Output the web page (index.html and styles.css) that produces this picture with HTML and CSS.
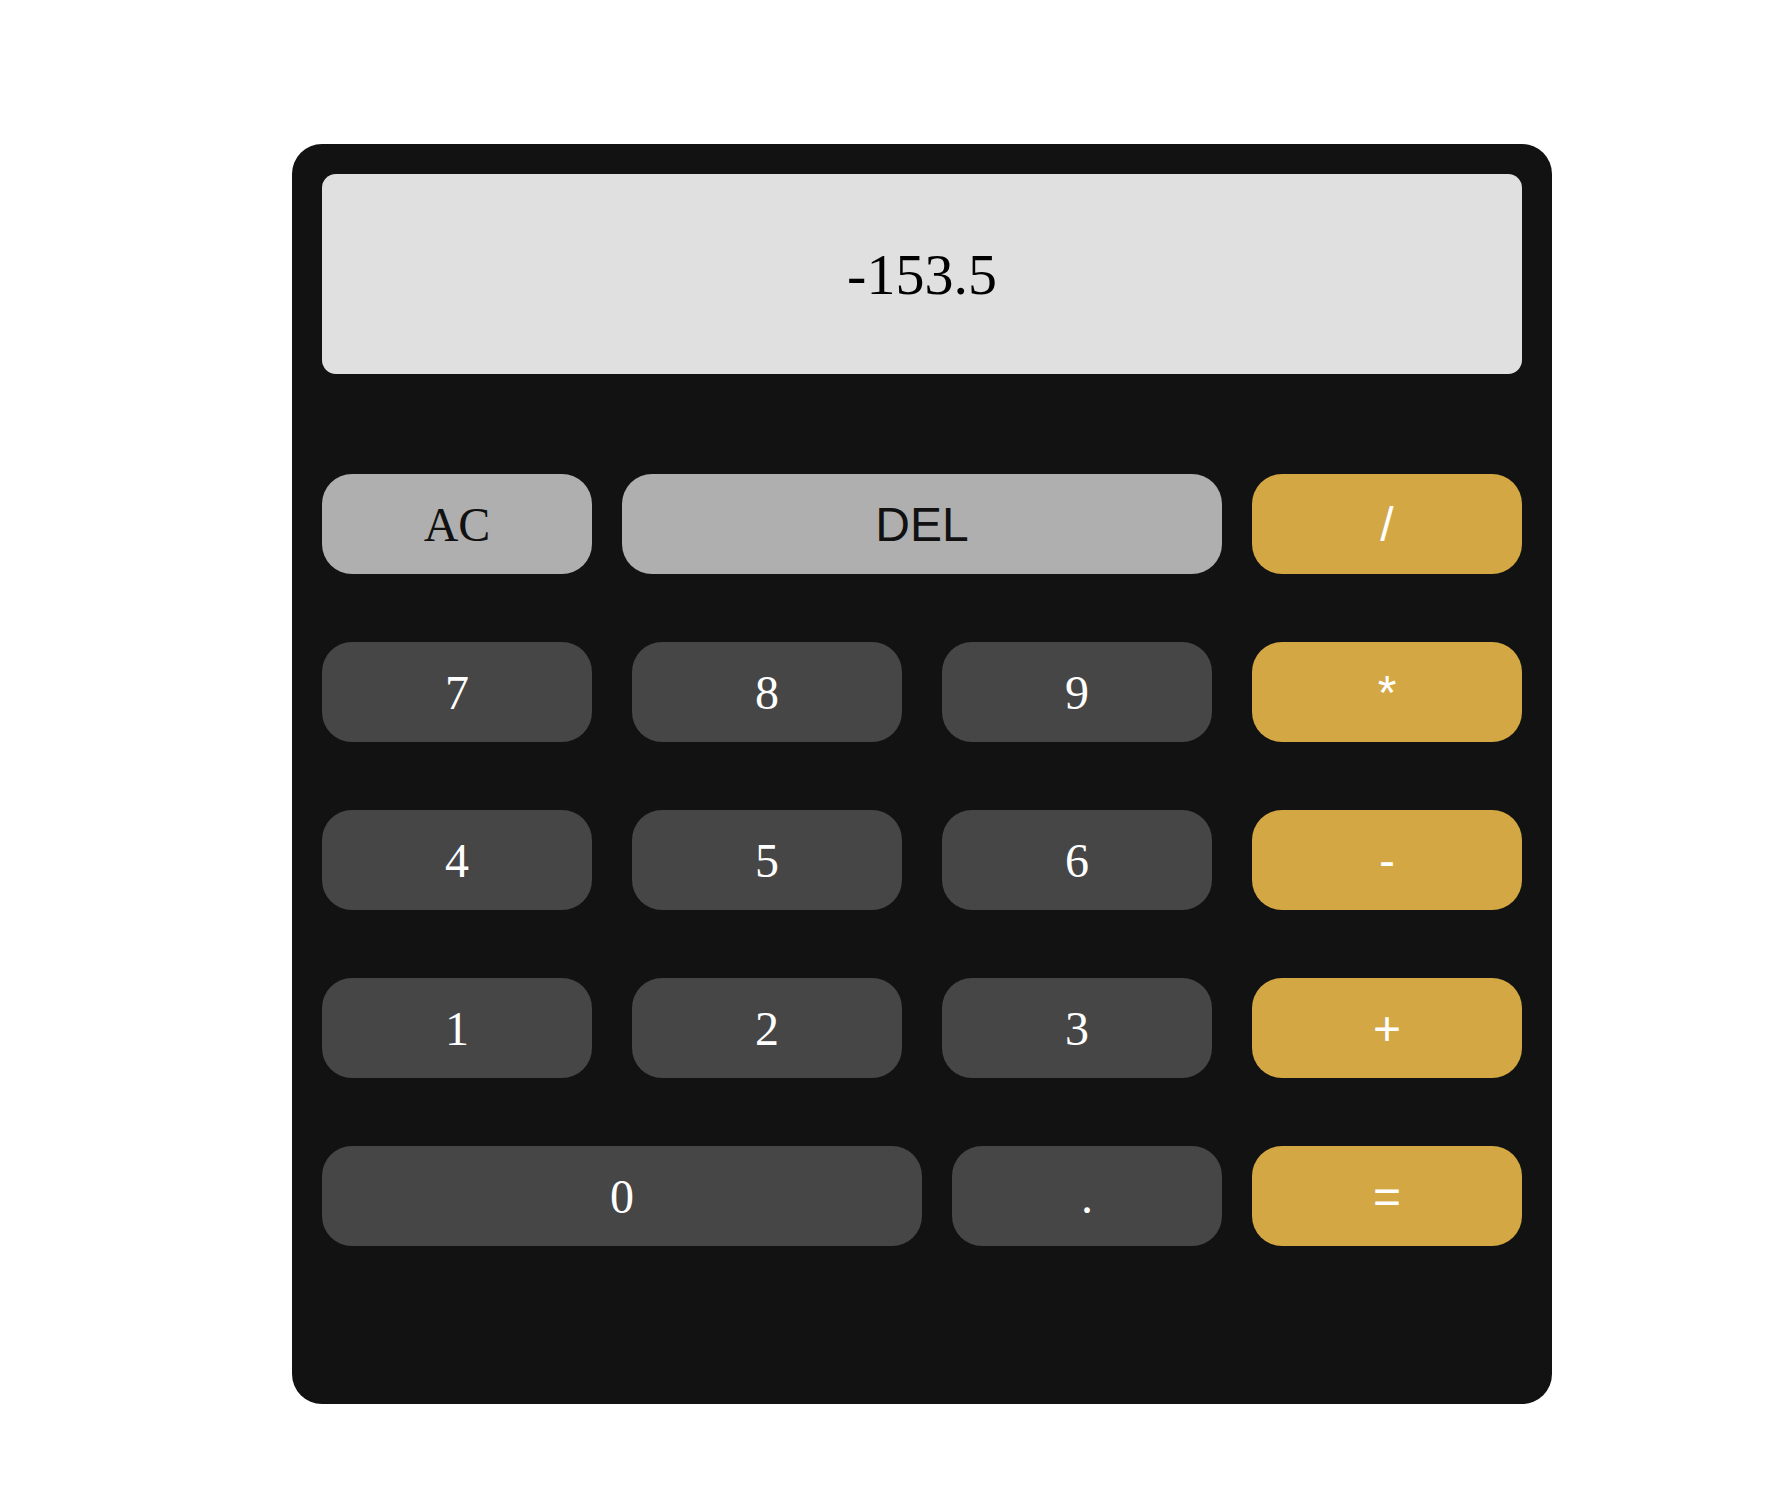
FILE: index.html
```html
<!DOCTYPE html>
<html>
<head>
<meta charset="utf-8">
<link rel="stylesheet" href="styles.css">
</head>
<body>
<div class="page">
  <div class="calc">
    <div class="display">-153.5</div>
    <div class="keys">
      <div class="row">
        <div class="key light serif">AC</div>
        <div class="key light sans wide">DEL</div>
        <div class="key gold sans">/</div>
      </div>
      <div class="row">
        <div class="key dark serif">7</div>
        <div class="key dark serif">8</div>
        <div class="key dark serif">9</div>
        <div class="key gold sans">*</div>
      </div>
      <div class="row">
        <div class="key dark serif">4</div>
        <div class="key dark serif">5</div>
        <div class="key dark serif">6</div>
        <div class="key gold sans">-</div>
      </div>
      <div class="row">
        <div class="key dark serif">1</div>
        <div class="key dark serif">2</div>
        <div class="key dark serif">3</div>
        <div class="key gold sans">+</div>
      </div>
      <div class="row">
        <div class="key dark serif wide">0</div>
        <div class="key dark serif">.</div>
        <div class="key gold sans">=</div>
      </div>
    </div>
  </div>
</div>
</body>
</html>
```

FILE: styles.css
```css
html, body {
  margin: 0;
  padding: 0;
  background: #ffffff;
}
.page {
  padding: 144px 0 0 292px;
}
.calc {
  width: 1260px;
  height: 1260px;
  box-sizing: border-box;
  padding: 30px;
  background: #121212;
  border-radius: 30px;
}
.display {
  height: 200px;
  background: #e0e0e0;
  border-radius: 14px;
  display: flex;
  align-items: center;
  justify-content: center;
  font-family: "Liberation Serif", "Times New Roman", serif;
  font-size: 58px;
  color: #000;
}
.keys {
  margin-top: 100px;
  display: flex;
  flex-direction: column;
  gap: 68px;
}
.row {
  display: flex;
  justify-content: space-between;
}
.key {
  width: 270px;
  height: 100px;
  border-radius: 30px;
  display: flex;
  align-items: center;
  justify-content: center;
  font-size: 48px;
}
.key.wide {
  width: 600px;
}
.serif {
  font-family: "Liberation Serif", "Times New Roman", serif;
}
.sans {
  font-family: "Liberation Sans", Arial, sans-serif;
}
.light {
  background: #afafaf;
  color: #111111;
}
.dark {
  background: #464646;
  color: #ffffff;
}
.gold {
  background: #d3a744;
  color: #ffffff;
}
```
